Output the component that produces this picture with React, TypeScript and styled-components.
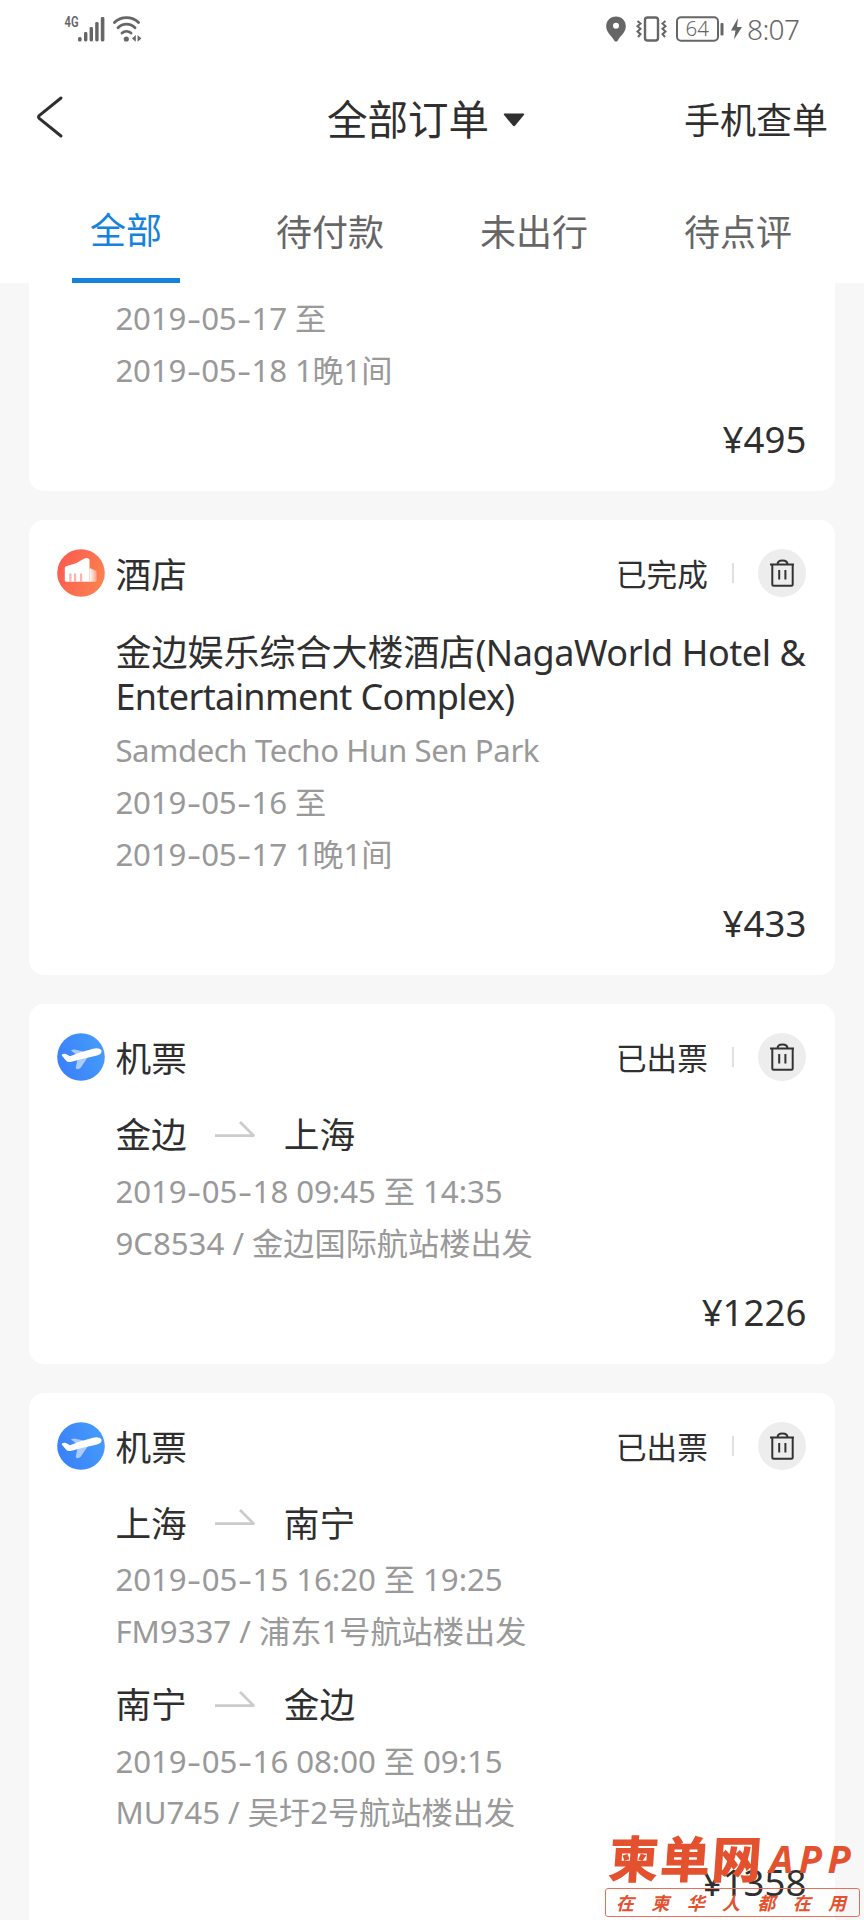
import React, { Fragment } from "react";
import styled, { createGlobalStyle } from "styled-components";

const GlobalStyle = createGlobalStyle`
  * { box-sizing: border-box; }
  body {
    margin: 0;
    background: #f7f7f7;
    color: #2f2f2f;
    font-family: "Noto Sans", "Noto Sans CJK SC", sans-serif;
  }
`;

const Screen = styled.div`
  position: relative;
  width: 864px;
  height: 1920px;
  overflow: hidden;
  background: #f7f7f7;
`;

const TopArea = styled.header`
  height: 283px;
  background: #fff;
`;

const StatusBar = styled.div`
  display: flex;
  justify-content: space-between;
  align-items: center;
  height: 58px;
  padding: 0 64px 0 63px;
  color: #666;

  svg {
    overflow: visible;
  }
`;

const StatusGroup = styled.div`
  display: flex;
  align-items: center;
`;

const Clock = styled.span`
  width: 52px;
  margin: 0 1px 0 4px;
  font-size: 28px;
  font-weight: 350;
  line-height: 30px;
  letter-spacing: -0.6px;
  white-space: nowrap;
`;

const NavBar = styled.div`
  display: grid;
  grid-template-columns: 1fr auto 1fr;
  align-items: center;
  height: 120px;
  padding: 4px 36px 0;
`;

const NavTitle = styled.h1`
  display: flex;
  align-items: center;
  gap: 14px;
  margin: 0 0 0 -12px;
  font-size: 40.5px;
  font-weight: 400;
  line-height: 48px;
`;

const NavAction = styled.span`
  justify-self: end;
  margin-top: 1px;
  font-size: 36px;
  line-height: 44px;
`;

const Tabs = styled.nav`
  display: grid;
  grid-template-columns: repeat(4, 204px);
  height: 105px;
  padding-left: 24px;
`;

const Tab = styled.div<{ $active?: boolean }>`
  justify-self: center;
  width: 108px;
  padding-top: ${(p) => (p.$active ? 31 : 33)}px;
  border-bottom: 5px solid ${(p) => (p.$active ? "#1583dc" : "transparent")};
  color: ${(p) => (p.$active ? "#1583dc" : "#666")};
  font-size: 36px;
  line-height: 44px;
  text-align: center;
`;

const OrderList = styled.main`
  display: flex;
  flex-direction: column;
  gap: 29.2px;
  padding: 0 29.3px;
`;

const Card = styled.article<{ $cut?: boolean }>`
  padding: ${(p) => (p.$cut ? "10px" : "29px")} 28.4px 30.6px;
  border-radius: ${(p) => (p.$cut ? "0 0 15px 15px" : "15px")};
  background: #fff;
`;

const CardHead = styled.div`
  display: flex;
  align-items: center;
  height: 48px;
  margin-left: -0.5px;
`;

const Category = styled.span`
  flex: 1;
  margin: 2px 0 0 10.3px;
  font-size: 35.7px;
  line-height: 44px;
`;

const Status = styled.span`
  margin-top: 2px;
  font-size: 30.6px;
  line-height: 40px;
`;

const Divider = styled.span`
  width: 2px;
  height: 20px;
  margin: 0 24.5px 0 24px;
  background: #e0e0e0;
`;

const DeleteButton = styled.button`
  display: flex;
  align-items: center;
  justify-content: center;
  width: 48px;
  height: 48px;
  padding: 0;
  border: 0;
  border-radius: 50%;
  background: #ededed;
`;

const Details = styled.div`
  padding-left: 57.7px;
`;

const HotelName = styled.h2`
  margin: 34.4px -10px 7.5px 0;
  font-size: 36px;
  font-weight: 400;
  line-height: 43.2px;
`;

const NameLine = styled.span`
  display: block;
  white-space: nowrap;
`;

const Tight = styled.span<{ $tracking: number }>`
  letter-spacing: ${(p) => p.$tracking}px;
`;

const InfoLine = styled.p<{ $tracking?: number }>`
  margin: 0;
  color: #999;
  font-size: 31.2px;
  letter-spacing: ${(p) => p.$tracking ?? 0}px;
  line-height: 51.8px;
  white-space: nowrap;
`;

const Dash = styled.span`
  display: inline-block;
  margin: 0 2.6px;
  transform: scaleX(1.4);
`;

const Leg = styled.section`
  margin-top: 26.3px;

  & + & {
    margin-top: 19.3px;
  }
`;

const Route = styled.div`
  display: flex;
  align-items: center;
  height: 58.4px;
  padding-bottom: 2.8px;
  font-size: 35.7px;
  line-height: 55.6px;
`;

const Price = styled.div`
  height: 40px;
  margin-top: 23.6px;
  font-size: 36.6px;
  line-height: 39.6px;
  text-align: right;
`;

const Watermark = styled.div`
  position: absolute;
  left: 605px;
  bottom: 3px;
  width: 255px;
  color: #e4512f;
`;

const WatermarkTitle = styled.div`
  display: flex;
  align-items: baseline;
  height: 60px;
  padding-left: 4px;
  line-height: 56px;
`;

const WatermarkName = styled.span`
  font-family: "Noto Sans CJK SC", sans-serif;
  font-size: 50px;
  font-weight: 900;
  letter-spacing: 1.5px;
  transform: skewX(-4deg);
`;

const WatermarkApp = styled.span`
  position: relative;
  top: -5px;
  margin-left: 6px;
  font-family: "Open Sans", sans-serif;
  font-size: 38px;
  font-style: italic;
  font-weight: 700;
  letter-spacing: 5.5px;
`;

const WatermarkTagline = styled.div`
  display: flex;
  justify-content: space-between;
  height: 29px;
  padding: 0 13px 0 10px;
  border: 1px solid #e8705a;
  border-radius: 3px;
  font-family: "Noto Sans CJK SC", sans-serif;
  font-size: 18px;
  font-style: italic;
  font-weight: 700;
  line-height: 26px;
`;

const SignalIcon = () => (
  <svg width="42" height="28" viewBox="0 0 42 28" fill="#666">
    <text x="1.500" y="12" fontFamily="Roboto, sans-serif" fontSize="15" fontWeight="600" textLength="14" lengthAdjust="spacingAndGlyphs">4G</text>
    <rect x="15" y="22" width="3.600" height="4.500" rx="1.600" />
    <rect x="21" y="17" width="3.400" height="9.500" rx="1.400" />
    <rect x="26.600" y="12" width="3.400" height="14.500" rx="1.400" />
    <rect x="32.200" y="7" width="3.400" height="19.500" rx="1.400" />
    <rect x="37.800" y="2" width="3.600" height="24.500" rx="1.400" />
  </svg>
);

const WifiIcon = () => (
  <svg width="30" height="28" viewBox="0 0 30 28" fill="none" stroke="#666" strokeWidth="2.800" strokeLinecap="round" style={{ marginLeft: 7 }}>
    <path d="M2.400 7.600C9 .9 20 .9 26.600 7.600" />
    <path d="M6 12.800C10.800 7.900 18.200 7.900 23 12.800" />
    <path d="M10 18C12.600 15.700 16.400 15.700 19 18" />
    <circle cx="14.300" cy="24" r="2.600" fill="#666" stroke="none" />
    <path d="M23.800 20v6.800L20 23.400zM25.600 20v6.800l3.800-3.400z" fill="#666" stroke="none" />
  </svg>
);

const PinIcon = () => (
  <svg width="20" height="26" viewBox="0 0 20 26">
    <path fillRule="evenodd" fill="#666" d="M10 .5C4.400.5.2 4.700.2 10.200c0 6.600 5.600 9.300 7.700 13.800.9 2 3.300 2 4.200 0 2.100-4.500 7.700-7.200 7.700-13.800C19.800 4.700 15.600.5 10 .5zM10 6.700a3 3 0 1 1 0 6 3 3 0 0 1 0-6z" />
  </svg>
);

const VibrateIcon = () => (
  <svg width="31" height="26" viewBox="0 0 31 26" fill="none" stroke="#666" style={{ marginLeft: 10 }}>
    <rect x="9" y="1.500" width="13" height="23" rx="2.500" strokeWidth="2.400" />
    <path strokeWidth="2" d="M1.500 5l3 2.500-3 2.700 3 2.600-3 2.700 3 2.700L2 21M29.500 5l-3 2.500 3 2.700-3 2.600 3 2.700-3 2.700 2.500 2.800" />
  </svg>
);

const BatteryIcon = () => (
  <svg width="48" height="26" viewBox="0 0 48 26" style={{ marginLeft: 9 }}>
    <rect x="1" y="1.200" width="41" height="23.600" rx="4" fill="none" stroke="#666" strokeWidth="2" />
    <rect x="44.500" y="7" width="3" height="12.500" rx="1" fill="#666" />
    <text x="21.300" y="20.300" textAnchor="middle" fill="#666" fontFamily="Noto Sans, sans-serif" fontSize="20.500" fontWeight="350">64</text>
  </svg>
);

const BoltIcon = () => (
  <svg width="13" height="24" viewBox="0 0 13 24" style={{ marginLeft: 6 }}>
    <path d="M8 1L1 13.500h4.500L4 22.500 12 10H7z" fill="#666" />
  </svg>
);

const BackIcon = () => (
  <svg width="28" height="44" viewBox="0 0 28 44" fill="none" stroke="#2f2f2f" strokeWidth="3" strokeLinecap="round" strokeLinejoin="round" style={{ marginTop: -6 }}>
    <path d="M25 3L3.200 20.600Q1.800 22 3.200 23.400L25 41" />
  </svg>
);

const CaretIcon = () => (
  <svg width="22" height="14" viewBox="0 0 22 14">
    <path d="M1.500.5h19a.8.8 0 0 1 .6 1.300L12.200 12.500a1.600 1.600 0 0 1-2.400 0L.9 1.800A.8.8 0 0 1 1.500.5z" fill="#2f2f2f" />
  </svg>
);

const TrashIcon = () => (
  <svg width="26" height="30" viewBox="0 0 26 30" fill="none" stroke="#333" strokeWidth="2">
    <path d="M1 6.500h24M3.300 6.500v19.700a1.500 1.500 0 0 0 1.500 1.500h17.400a1.500 1.500 0 0 0 1.500-1.500V6.500M8.500 6.500c0-2.700 1.500-4.100 5-4.100s5 1.400 5 4.100M10.200 12v9.500M16.400 12v9.500" />
  </svg>
);

const ArrowIcon = () => (
  <svg width="42" height="18" viewBox="0 0 42 18" fill="none" stroke="#ccc" strokeWidth="2.800" strokeLinejoin="round" style={{ margin: "-13px 27.5px 0 27.5px" }}>
    <path d="M1 15.600h38.500L26 2" />
  </svg>
);

const HotelIcon = () => (
  <svg width="48" height="48" viewBox="0 0 48 48">
    <defs>
      <linearGradient id="hotelBg" x1="0" x2="1" y1="0.300" y2="0.700">
        <stop offset="0" stopColor="#fc5a50" />
        <stop offset="1" stopColor="#fb8350" />
      </linearGradient>
      <linearGradient id="hotelWing" x1="0" x2="1">
        <stop offset="0" stopColor="#fff" />
        <stop offset="1" stopColor="#fff" stopOpacity="0.300" />
      </linearGradient>
    </defs>
    <circle cx="24" cy="24" r="23.800" fill="url(#hotelBg)" />
    <path d="M32.500 19l6 2.500q1.200.5 1.200 1.800v8q0 1.400-1.400 1.400h-5.800z" fill="url(#hotelWing)" />
    <path d="M7.800 19.200q0-1.500 1.300-2L19 14.300l8-4.600q3.500-1.600 5.500.8v22.200H9.200q-1.400 0-1.400-1.400z" fill="#fff" />
    <path d="M12.300 24.500h2.200v8.200h-2.200zM17 24.500h2.200v8.200H17zM23 24.500h2.200v8.200H23z" fill="#fcb3ac" />
  </svg>
);

const PlaneIcon = () => (
  <svg width="48" height="48" viewBox="0 0 48 48">
    <defs>
      <linearGradient id="planeBg" x1="0" x2="1" y1="0.700" y2="0.300">
        <stop offset="0" stopColor="#3a7ffa" />
        <stop offset="1" stopColor="#459cfa" />
      </linearGradient>
    </defs>
    <circle cx="24" cy="24" r="23.800" fill="url(#planeBg)" />
    <path d="M14 17.500q2-1.200 4.500-.8l8 1.800-6 4z" fill="#a9cbfd" />
    <path d="M20.500 26l-1.700 8.500q-.2 2 2 1.800 2-.3 3.200-2L31 24z" fill="#a9cbfd" />
    <path d="M5 21.500q2-1.500 4-.4l4 2.200 9-3.600 14-4q6-1.200 8.300 1.300 1.500 3.500-4.300 5.500L23 26.500 13.500 29q-3 .6-4.800-1.800L5.200 23q-.7-.9-.2-1.500z" fill="#fff" />
  </svg>
);

const DateText = ({ value }: { value: string }) => (
  <>
    {value.split("-").map((part, i) => (
      <Fragment key={i}>
        {i > 0 && <Dash>-</Dash>}
        {part}
      </Fragment>
    ))}
  </>
);

const OrderHead = ({ kind, status }: { kind: "hotel" | "flight"; status: string }) => (
  <CardHead>
    {kind === "hotel" ? <HotelIcon /> : <PlaneIcon />}
    <Category>{kind === "hotel" ? "酒店" : "机票"}</Category>
    <Status>{status}</Status>
    <Divider />
    <DeleteButton aria-label="删除">
      <TrashIcon />
    </DeleteButton>
  </CardHead>
);

interface LegData {
  from: string;
  to: string;
  time: string;
  flight: string;
}

const FlightOrder = ({ legs, price }: { legs: LegData[]; price: string }) => (
  <Card>
    <OrderHead kind="flight" status="已出票" />
    <Details>
      {legs.map((leg) => (
        <Leg key={leg.flight}>
          <Route>
            {leg.from}
            <ArrowIcon />
            {leg.to}
          </Route>
          <InfoLine $tracking={-0.04}>
            <DateText value={leg.time} />
          </InfoLine>
          <InfoLine>{leg.flight}</InfoLine>
        </Leg>
      ))}
    </Details>
    <Price>{price}</Price>
  </Card>
);

export default function App() {
  return (
    <Screen>
      <GlobalStyle />
      <TopArea>
        <StatusBar>
          <StatusGroup>
            <SignalIcon />
            <WifiIcon />
          </StatusGroup>
          <StatusGroup>
            <PinIcon />
            <VibrateIcon />
            <BatteryIcon />
            <BoltIcon />
            <Clock>8:07</Clock>
          </StatusGroup>
        </StatusBar>
        <NavBar>
          <BackIcon />
          <NavTitle>
            全部订单
            <CaretIcon />
          </NavTitle>
          <NavAction>手机查单</NavAction>
        </NavBar>
        <Tabs>
          <Tab $active>全部</Tab>
          <Tab>待付款</Tab>
          <Tab>未出行</Tab>
          <Tab>待点评</Tab>
        </Tabs>
      </TopArea>
      <OrderList>
        <Card $cut>
          <Details>
            <InfoLine $tracking={-0.16}><DateText value="2019-05-17 至" /></InfoLine>
            <InfoLine $tracking={-0.16}><DateText value="2019-05-18 1晚1间" /></InfoLine>
          </Details>
          <Price>¥495</Price>
        </Card>
        <Card>
          <OrderHead kind="hotel" status="已完成" />
          <Details>
            <HotelName>
              <NameLine>
                金边娱乐综合大楼酒店<Tight $tracking={-0.42}>(NagaWorld Hotel &amp;</Tight>
              </NameLine>
              <NameLine>
                <Tight $tracking={-0.62}>Entertainment Complex)</Tight>
              </NameLine>
            </HotelName>
            <InfoLine $tracking={-0.42}>Samdech Techo Hun Sen Park</InfoLine>
            <InfoLine $tracking={-0.16}><DateText value="2019-05-16 至" /></InfoLine>
            <InfoLine $tracking={-0.16}><DateText value="2019-05-17 1晚1间" /></InfoLine>
          </Details>
          <Price>¥433</Price>
        </Card>
        <FlightOrder
          price="¥1226"
          legs={[{ from: "金边", to: "上海", time: "2019-05-18 09:45 至 14:35", flight: "9C8534 / 金边国际航站楼出发" }]}
        />
        <FlightOrder
          price="¥1358"
          legs={[
            { from: "上海", to: "南宁", time: "2019-05-15 16:20 至 19:25", flight: "FM9337 / 浦东1号航站楼出发" },
            { from: "南宁", to: "金边", time: "2019-05-16 08:00 至 09:15", flight: "MU745 / 吴圩2号航站楼出发" },
          ]}
        />
      </OrderList>
      <Watermark>
        <WatermarkTitle>
          <WatermarkName>柬单网</WatermarkName>
          <WatermarkApp>APP</WatermarkApp>
        </WatermarkTitle>
        <WatermarkTagline>
          {["在", "柬", "华", "人", "都", "在", "用"].map((ch, i) => (
            <span key={i}>{ch}</span>
          ))}
        </WatermarkTagline>
      </Watermark>
    </Screen>
  );
}
